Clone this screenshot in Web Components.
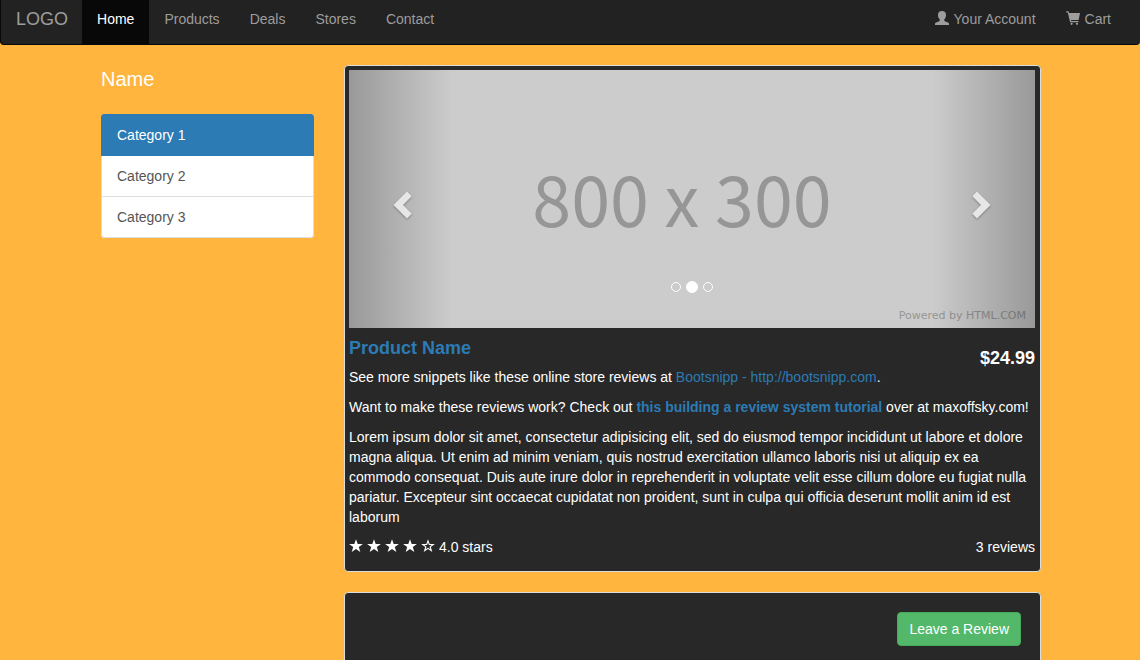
<!DOCTYPE html>
<html lang="en">
<head>
<meta charset="utf-8">
<meta name="viewport" content="width=device-width, initial-scale=1">
<title>Product Name</title>
<style>
  :root {
    --page: #ffb53e;
    --panel: #282828;
    --line: #dddddd;
    --accent: #2c7bb5;
  }
  body {
    margin: 0;
    background: var(--page);
    color: #fff;
    font: 14px/20px "Liberation Sans", Arial, sans-serif;
  }
</style>
</head>
<body>
<site-nav>
  <nav-link slot="start" href="#home" active>Home</nav-link>
  <nav-link slot="start" href="#products">Products</nav-link>
  <nav-link slot="start" href="#deals">Deals</nav-link>
  <nav-link slot="start" href="#stores">Stores</nav-link>
  <nav-link slot="start" href="#contact">Contact</nav-link>
  <nav-link slot="end" href="#account"><glyph-icon name="user"></glyph-icon>Your Account</nav-link>
  <nav-link slot="end" href="#cart"><glyph-icon name="cart"></glyph-icon>Cart</nav-link>
</site-nav>
<shop-layout>
  <category-list slot="side" heading="Name">
    <category-item href="#c1" active>Category 1</category-item>
    <category-item href="#c2">Category 2</category-item>
    <category-item href="#c3">Category 3</category-item>
  </category-list>
  <product-card></product-card>
  <review-well></review-well>
</shop-layout>

<script>
const define = (name, html, setup) => {
  const template = document.createElement('template');
  template.innerHTML = html;
  customElements.define(name, class extends HTMLElement {
    constructor() {
      super();
      this.attachShadow({ mode: 'open' }).append(template.content.cloneNode(true));
    }
    connectedCallback() {
      if (setup) setup(this, this.shadowRoot);
    }
  });
};

const glyphs = {
  user: '<path d="M7 0C9.6 0 11 1.5 11 3.9C11 5.8 10.4 7.3 9.3 8.3V9.2C9.3 9.8 9.7 10.1 10.3 10.4L13 11.6C13.7 11.9 14 12.4 14 13V14H0V13C0 12.4 .3 11.9 1 11.6L3.7 10.4C4.3 10.1 4.7 9.8 4.7 9.2V8.3C3.6 7.3 3 5.8 3 3.9C3 1.5 4.4 0 7 0Z"/>',
  cart: '<path d="M0 .9C0 .6.3.3.6.3H2.2C2.5.3 2.7.5 2.8.8L3.1 2H14L12.8 8.3C12.7 8.7 12.5 8.9 12.1 8.9H5L5.2 10H12.1C12.5 10 12.7 10.3 12.7 10.6S12.5 11.2 12.1 11.2H4.7C4.4 11.2 4.1 11 4 10.7L1.8 1.5H.6C.3 1.5 0 1.2 0 .9Z"/><circle cx="5.6" cy="12.8" r="1.1"/><circle cx="11" cy="12.8" r="1.1"/>',
  star: '<path d="M7 .3L8.7 5H13.9L9.8 8.1L11.3 13.1L7 10.1L2.7 13.1L4.2 8.1L.1 5H5.3Z"/>',
  'star-empty': '<path fill-rule="evenodd" d="M7 .3L8.7 5H13.9L9.8 8.1L11.3 13.1L7 10.1L2.7 13.1L4.2 8.1L.1 5H5.3ZM7 3.5L6.1 6.1H3.4L5.5 7.7L4.7 10.3L7 8.7L9.3 10.3L8.5 7.7L10.6 6.1H7.9Z"/>'
};
define('glyph-icon', `
  <style>
    :host { display: inline-block; width: 14px; height: 14px; }
    svg { display: block; width: 14px; height: 14px; fill: currentColor; }
  </style>
  <svg viewBox="0 0 14 14" aria-hidden="true"></svg>`,
  (el, root) => { root.querySelector('svg').innerHTML = glyphs[el.getAttribute('name')] || ''; });

const link = (el, root) => { root.querySelector('a').href = el.getAttribute('href'); };

define('nav-link', `
  <style>
    :host { display: block; }
    a { display: flex; gap: 5px; padding: 9px 15px 15px; color: #9d9d9d; text-decoration: none; }
    a:hover { color: #fff; }
    :host([active]) a { background: #080808; color: #fff; }
    ::slotted(glyph-icon) { margin-top: 2px; }
  </style>
  <a><slot></slot></a>`, link);

define('site-nav', `
  <style>
    :host { display: block; }
    nav { display: flex; justify-content: space-between; padding-right: 14px; background: #222;
      border: solid #080808; border-width: 0 0 1px 1px; border-radius: 0 0 4px 4px; }
    div { display: flex; }
    .brand { padding: 9px 14px 15px 15px; font-size: 18px; color: #9d9d9d; text-decoration: none; }
  </style>
  <nav>
    <div><a class="brand" href="#top">LOGO</a><slot name="start"></slot></div>
    <div><slot name="end"></slot></div>
  </nav>`);

define('shop-layout', `
  <style>
    :host { display: block; }
    main { box-sizing: border-box; max-width: 970px; margin: 20px auto 0; padding: 0 14px 0 16px;
      display: grid; grid-template-columns: 213px minmax(0, 1fr); gap: 30px; align-items: start; }
    section { display: grid; gap: 20px; padding-bottom: 20px; }
    @media (max-width: 800px) { main { grid-template-columns: minmax(0, 1fr); } }
  </style>
  <main>
    <slot name="side"></slot>
    <section><slot></slot></section>
  </main>`);

define('category-list', `
  <style>
    :host { display: block; }
    h2 { margin: 0 0 20px; font-size: 20px; line-height: 29px; font-weight: 300; }
    div { border-radius: 4px; overflow: hidden; background: #fff; }
  </style>
  <h2></h2>
  <div role="list"><slot></slot></div>`,
  (el, root) => { root.querySelector('h2').textContent = el.getAttribute('heading'); });

define('category-item', `
  <style>
    :host { display: block; }
    :host(:not(:last-child)) { margin-bottom: -1px; }
    a { display: block; padding: 10px 15px; border: 1px solid var(--line); color: #555; text-decoration: none; }
    :host([active]) { position: relative; }
    :host([active]) a { background: var(--accent); border-color: var(--accent); color: #fff; }
    :host(:last-child) a { border-radius: 0 0 4px 4px; }
  </style>
  <a><slot></slot></a>`, link);

define('image-carousel', `
  <style>
    :host { display: block; }
    .frame { position: relative; aspect-ratio: 343 / 129; background: #ccc; overflow: hidden; }
    .slide { height: 100%; display: grid; place-items: center; color: #969696;
      font: 70px/90px "Noto Sans CJK JP", "Liberation Sans", sans-serif; }
    .slide span { padding: 0 20px 4px 0; }
    .credit { position: absolute; right: 9px; bottom: 4px; color: #969696;
      font: 11px/16px "DejaVu Sans", sans-serif; }
    button { position: absolute; top: 0; bottom: 0; width: 15%; border: 0; display: flex;
      align-items: center; justify-content: center; cursor: pointer; }
    .prev { left: 0; padding: 12px 0 0 5px; background: linear-gradient(to right, rgba(0,0,0,.25), transparent); }
    .next { right: 0; padding: 12px 5px 0 0; background: linear-gradient(to right, transparent, rgba(0,0,0,.25)); }
    svg { width: 20px; height: 28px; fill: #e6e6e6; filter: drop-shadow(0 1px 1px rgba(0,0,0,.3)); }
    .dots { position: absolute; left: 0; right: 0; bottom: 35px; display: flex; gap: 5px;
      align-items: center; justify-content: center; height: 12px; }
    i { box-sizing: border-box; width: 10px; height: 10px; border: 1px solid #fff; border-radius: 50%; }
    i.on { width: 12px; height: 12px; background: #fff; }
  </style>
  <div class="frame">
    <div class="slide"><span>800 x 300</span></div>
    <div class="credit">Powered by HTML.COM</div>
    <button class="prev" aria-label="Previous"><svg viewBox="0 0 20 28"><path d="M.5 14L14 .5L18.7 5.2L10 14L18.7 22.8L14 27.5Z"/></svg></button>
    <button class="next" aria-label="Next"><svg viewBox="0 0 20 28"><path d="M19.5 14L6 .5L1.3 5.2L10 14L1.3 22.8L6 27.5Z"/></svg></button>
    <div class="dots"><i></i><i class="on"></i><i></i></div>
  </div>`);

define('star-rating', `
  <style>
    :host { display: flex; gap: 4px; }
    glyph-icon { margin-top: 2px; }
  </style>
  <glyph-icon name="star"></glyph-icon><glyph-icon name="star"></glyph-icon><glyph-icon name="star"></glyph-icon><glyph-icon name="star"></glyph-icon><glyph-icon name="star-empty"></glyph-icon>
  <span><slot></slot></span>`);

define('product-card', `
  <style>
    :host { display: block; padding: 4px 5px 4px 4px; background: var(--panel); border: 1px solid var(--line); border-radius: 4px; }
    header { display: flex; justify-content: space-between; align-items: flex-start; height: 29px; padding-top: 10px; }
    h4 { margin: 0; font-size: 18px; line-height: 20px; }
    .price { padding-top: 10px; }
    a { color: var(--accent); text-decoration: none; }
    p { margin: 0 0 10px; }
    footer { display: flex; justify-content: space-between; padding-bottom: 10px; }
  </style>
  <image-carousel></image-carousel>
  <header><h4><a href="#product">Product Name</a></h4><h4 class="price">$24.99</h4></header>
  <p>See more snippets like these online store reviews at <a href="http://bootsnipp.com">Bootsnipp - http://bootsnipp.com</a>.</p>
  <p>Want to make these reviews work? Check out <a href="#tutorial"><strong>this building a review system tutorial</strong></a> over at maxoffsky.com!</p>
  <p>Lorem ipsum dolor sit amet, consectetur adipisicing elit, sed do eiusmod tempor incididunt ut labore et dolore magna aliqua. Ut enim ad minim veniam, quis nostrud exercitation ullamco laboris nisi ut aliquip ex ea commodo consequat. Duis aute irure dolor in reprehenderit in voluptate velit esse cillum dolore eu fugiat nulla pariatur. Excepteur sint occaecat cupidatat non proident, sunt in culpa qui officia deserunt mollit anim id est laborum</p>
  <footer><star-rating>4.0 stars</star-rating><span>3 reviews</span></footer>`);

define('review-well', `
  <style>
    :host { display: flex; justify-content: flex-end; align-items: flex-start; min-height: 80px; padding: 19px;
      background: var(--panel); border: 1px solid var(--line); border-radius: 4px; }
    button { padding: 6px 11px; border: 1px solid #45ab58; border-radius: 4px; background: #54b86a;
      color: #fff; font: inherit; cursor: pointer; }
  </style>
  <button>Leave a Review</button>`);
</script>
</body>
</html>
